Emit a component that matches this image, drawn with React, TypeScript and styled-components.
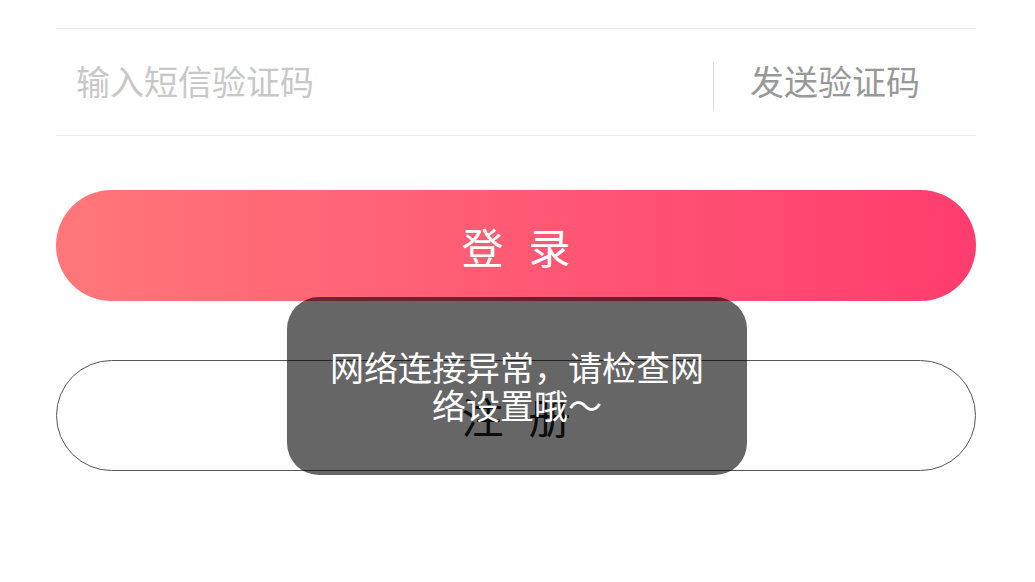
import React from "react";
import styled, { createGlobalStyle } from "styled-components";

const GlobalStyle = createGlobalStyle`
  html, body {
    margin: 0;
    padding: 0;
    background: #fff;
  }
  body {
    font-family: "Noto Sans CJK SC", "Noto Sans", sans-serif;
  }
`;

const Page = styled.div`
  position: relative;
  width: 1035px;
  height: 582px;
  overflow: hidden;
  background: #fff;
`;

const Form = styled.div`
  display: flex;
  flex-direction: column;
  padding: 28px 59px 0 56px;
`;

const CodeRow = styled.div`
  display: flex;
  align-items: center;
  height: 106px;
  border-top: 1px solid #eeeeee;
  border-bottom: 1px solid #eeeeee;
`;

const CodeInput = styled.input`
  flex: 1;
  min-width: 0;
  border: none;
  outline: none;
  background: transparent;
  padding: 0 0 4px 20px;
  font-family: inherit;
  font-size: 34px;
  color: #333;

  &::placeholder {
    color: #c8c8c8;
  }
`;

const Divider = styled.span`
  width: 1px;
  height: 49px;
  margin-top: 8px;
  background: #dddddd;
`;

const SendButton = styled.button`
  border: none;
  background: transparent;
  padding: 0 56px 4px 36px;
  font-family: inherit;
  font-size: 34px;
  color: #999999;
  cursor: pointer;
`;

const PillButton = styled.button<{ $primary?: boolean }>`
  display: flex;
  align-items: center;
  justify-content: center;
  height: 111px;
  margin-top: ${(p) => (p.$primary ? "54px" : "59px")};
  border-radius: 56px;
  border: ${(p) => (p.$primary ? "none" : "1px solid #555")};
  background: ${(p) =>
    p.$primary ? "linear-gradient(90deg, #ff777a 0%, #ff3c6e 100%)" : "#fff"};
  color: ${(p) => (p.$primary ? "#fff" : "#222")};
  font-family: inherit;
  font-size: 42px;
  letter-spacing: 25px;
  padding: 0 0 0 25px;
  cursor: pointer;
`;

const Toast = styled.div`
  position: absolute;
  left: 287px;
  top: 297px;
  width: 460px;
  height: 178px;
  box-sizing: border-box;
  padding: 0 40px;
  display: flex;
  align-items: center;
  justify-content: center;
  border-radius: 32px;
  background: rgba(0, 0, 0, 0.6);
  color: #fff;
  font-size: 34px;
  line-height: 38px;
  text-align: center;
`;

export default function App() {
  return (
    <Page>
      <GlobalStyle />
      <Form>
        <CodeRow>
          <CodeInput placeholder="输入短信验证码" />
          <Divider />
          <SendButton>发送验证码</SendButton>
        </CodeRow>
        <PillButton $primary>登录</PillButton>
        <PillButton>注册</PillButton>
      </Form>
      <Toast>网络连接异常，请检查网络设置哦～</Toast>
    </Page>
  );
}
